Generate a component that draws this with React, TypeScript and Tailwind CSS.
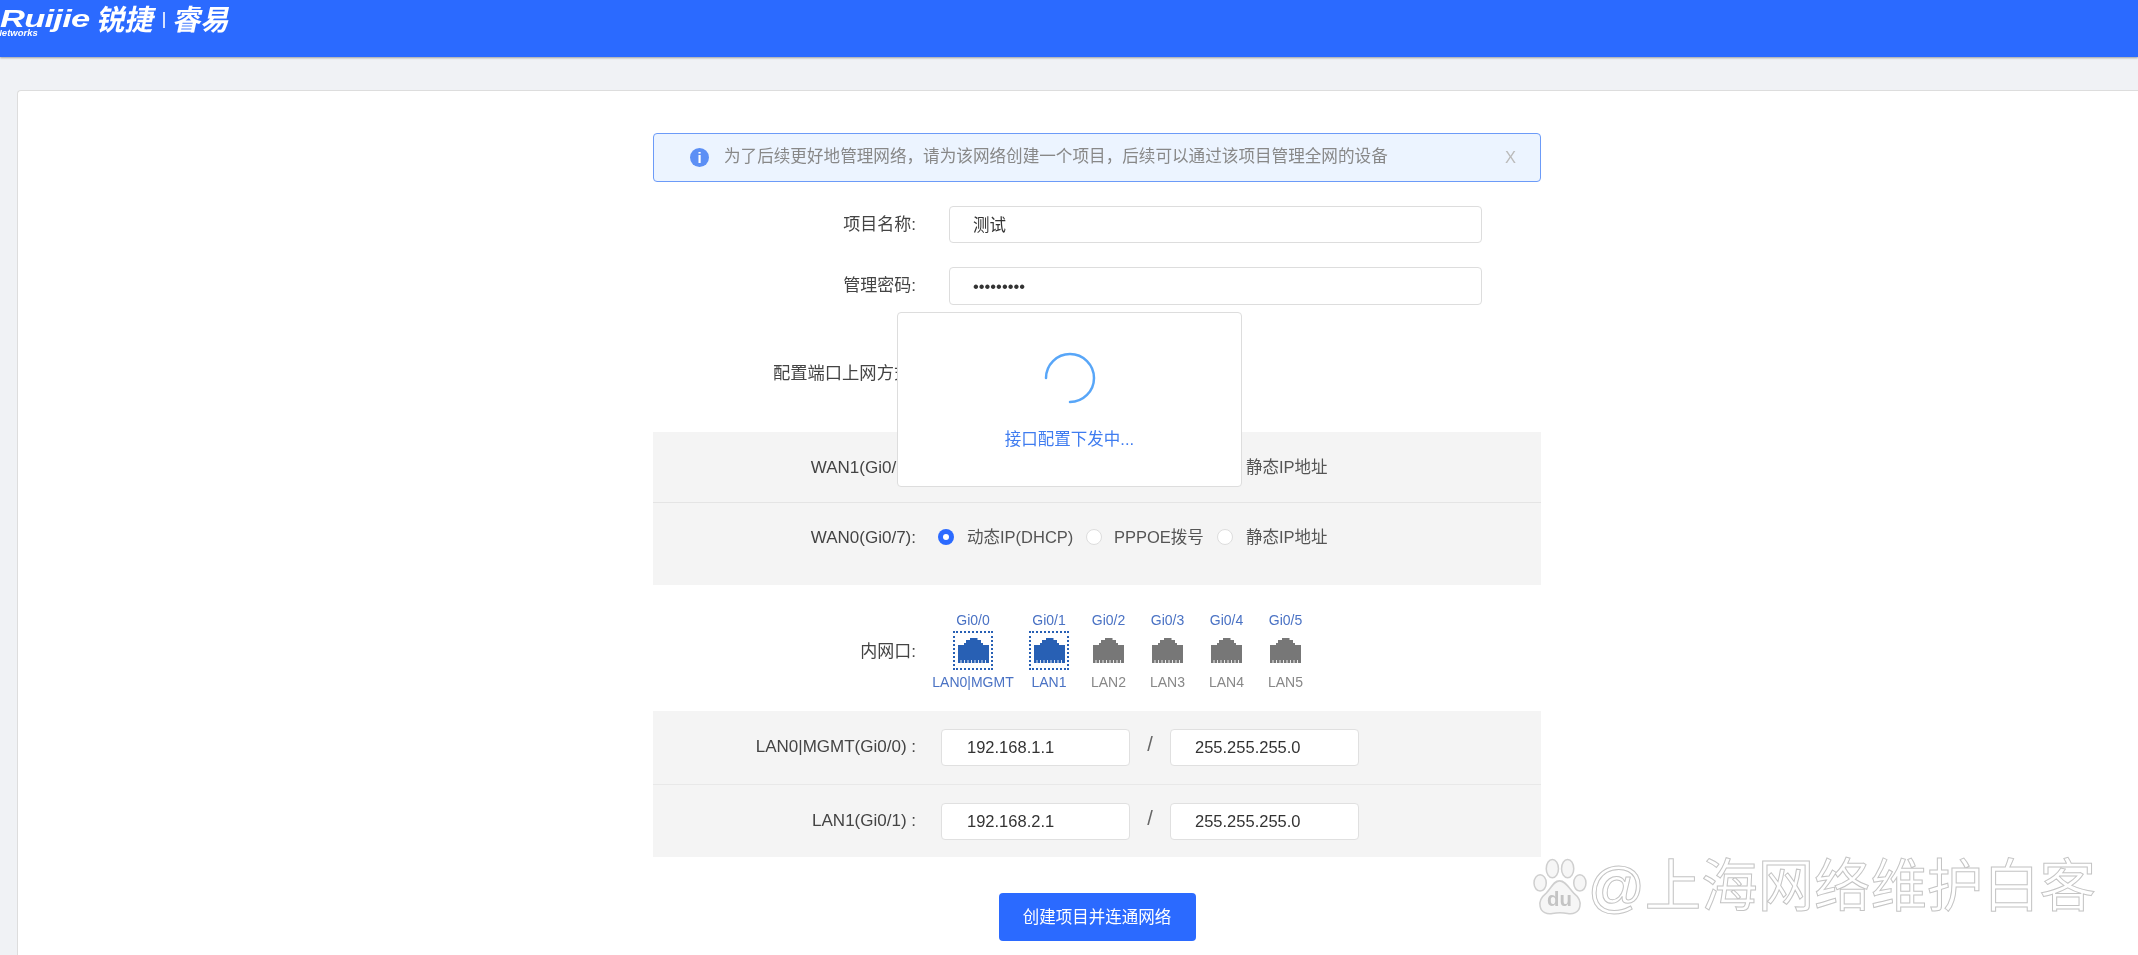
const cjk = 'font-["Liberation_Sans","Noto_Sans_CJK_SC",sans-serif]'

function Radio({ checked = false }: { checked?: boolean }) {
  if (checked) {
    return (
      <span className="flex h-4 w-4 items-center justify-center rounded-full bg-[#2b6aff]">
        <span className="h-[6px] w-[6px] rounded-full bg-white" />
      </span>
    )
  }
  return <span className="h-4 w-4 rounded-full border border-[#dddddd] bg-white" />
}

function WanRow({ label, border }: { label: string; border?: boolean }) {
  return (
    <div className={border ? 'flex h-[71px] items-center border-b border-[#e4e4e4] pt-[1px]' : 'flex h-[82px] items-start pt-[22px]'}>
      <div className="w-[263px] text-right text-[17px] text-[#444444]">{label}</div>
      <div className="ml-[22px] flex items-center">
        <Radio checked />
        <span className="ml-[13px] w-[119px] text-[#555555]">动态IP(DHCP)</span>
        <Radio />
        <span className="ml-[12px] w-[103px] text-[#555555]">PPPOE拨号</span>
        <Radio />
        <span className="ml-[13px] text-[#555555]">静态IP地址</span>
      </div>
    </div>
  )
}

function PortIcon({ active }: { active: boolean }) {
  return (
    <span className={active ? 'flex h-[39px] w-[40px] items-center justify-center border-[2px] border-dotted border-[#2860b4]' : 'flex h-[39px] w-[40px] items-center justify-center'}>
      <svg width="31" height="25" viewBox="0 0 31 25">
        <path
          d="M12 0h7.500v2h3.500v3h2v2h6v18H0V7h6V5h2V2h4z"
          fill={active ? '#2860b4' : '#777777'}
        />
        <path d="M3 25v-3M6.500 25v-3M10 25v-3M13.500 25v-3M17 25v-3M20.500 25v-3M24 25v-3M27.500 25v-3" stroke="#ffffff" strokeWidth="1" opacity="0.85" />
      </svg>
    </span>
  )
}

const ports = [
  { gi: 'Gi0/0', lan: 'LAN0|MGMT', active: true, width: 'w-[92px]' },
  { gi: 'Gi0/1', lan: 'LAN1', active: true, width: 'w-[60px]' },
  { gi: 'Gi0/2', lan: 'LAN2', active: false, width: 'w-[59px]' },
  { gi: 'Gi0/3', lan: 'LAN3', active: false, width: 'w-[59px]' },
  { gi: 'Gi0/4', lan: 'LAN4', active: false, width: 'w-[59px]' },
  { gi: 'Gi0/5', lan: 'LAN5', active: false, width: 'w-[59px]' },
]

function LanRow({ label, ip, border }: { label: string; ip: string; border?: boolean }) {
  return (
    <div className={border ? 'flex h-[74px] items-center border-b border-[#e8e8e8] pb-[1px]' : 'flex h-[72px] items-center'}>
      <div className="w-[263px] text-right text-[17px] text-[#444444]">{label}</div>
      <input
        readOnly
        value={ip}
        className="ml-[25px] h-[37px] w-[189px] rounded border border-[#e0e0e0] bg-white pl-[25px] text-[#333333] outline-none"
      />
      <span className="mb-[6px] w-[40px] text-center text-[20px] text-[#666666]">/</span>
      <input
        readOnly
        value="255.255.255.0"
        className="h-[37px] w-[189px] rounded border border-[#e0e0e0] bg-white pl-[24px] text-[#333333] outline-none"
      />
    </div>
  )
}

function Watermark() {
  return (
    <div className="absolute right-[42px] bottom-[39px] flex items-center gap-[1px]">
      <svg width="54" height="58" viewBox="0 0 53 56">
        <g fill="#f6f6f6" stroke="#cfcfcf" strokeWidth="1.500">
          <ellipse cx="7" cy="24" rx="6" ry="8" />
          <ellipse cx="19" cy="10" rx="6" ry="9" />
          <ellipse cx="34" cy="10" rx="6" ry="9" />
          <ellipse cx="46" cy="24" rx="6" ry="8" />
          <path d="M26 22c-6 0-8 7-13 12-5 4-7 9-6 13 1 6 7 8 12 7 5-1 10-1 15 0 5 1 11-1 12-7 1-4-1-9-6-13-5-5-8-12-14-12z" />
        </g>
        <text x="26" y="47" textAnchor="middle" fontSize="20" fontWeight="bold" fontFamily="Liberation Sans" fill="#c4c4c4">du</text>
      </svg>
      <span className={`${cjk} text-[56.400px] leading-none text-white [-webkit-text-stroke:1px_#c4c4c4]`}>@上海网络维护白客</span>
    </div>
  )
}

export default function App() {
  return (
    <div className={`${cjk} relative flex h-[955px] flex-col overflow-hidden bg-[#f0f2f5] text-[16.500px] blur-[0.4px]`}>
      <header className="relative flex h-[57px] shrink-0 items-start overflow-hidden bg-[#2b6aff] text-white shadow-[0_1px_2px_rgba(0,0,0,0.35)]">
        <span className="absolute top-[28px] left-[-5px] text-[9.500px] leading-[10px] font-bold italic">Networks</span>
        <div className="flex items-start pt-[2px]">
          <span className="w-[98px] origin-left scale-x-150 pt-[6px] text-[23px] leading-[22px] font-bold tracking-[-0.500px] italic">Ruijie</span>
          <span className="text-[28.500px] leading-[36px] font-bold -skew-x-12">锐捷</span>
          <span className="mt-[10px] ml-[8px] h-[16px] w-[2px] bg-white/80" />
          <span className="ml-[9px] text-[28.500px] leading-[36px] font-bold -skew-x-12">睿易</span>
        </div>
      </header>

      <main className="flex flex-1 pt-[33px] pl-[17px]">
        <div className="flex-1 rounded-tl border border-r-0 border-b-0 border-[#dddddd] bg-white pt-[42px] pl-[635px]">
          <div className="relative w-[888px]">
            <div className="flex h-[49px] items-center rounded border border-[#6c9bf8] bg-[#ecf4ff] pr-[24px] pl-[36px] text-[#888888]">
              <span className="flex h-[19px] w-[19px] items-center justify-center rounded-full bg-[#5c8ff5] text-[15px] leading-none font-bold text-white">i</span>
              <span className="ml-[15px] flex-1 text-[16.600px]">为了后续更好地管理网络，请为该网络创建一个项目，后续可以通过该项目管理全网的设备</span>
              <span className="text-[#bbbbbb]">X</span>
            </div>

            <div className="mt-[24px] flex h-[37px] items-center">
              <div className="w-[263px] text-right text-[17px] text-[#444444]">项目名称:</div>
              <input readOnly value="测试" className="ml-[33px] h-[37px] w-[533px] rounded border border-[#dddddd] pb-[1px] pl-[23px] text-[#333333] outline-none" />
            </div>
            <div className="mt-[24px] flex h-[38px] items-center">
              <div className="w-[263px] text-right text-[17px] text-[#444444]">管理密码:</div>
              <input readOnly type="password" value="123456789" className="ml-[33px] h-[38px] w-[533px] rounded border border-[#dddddd] pl-[23px] text-[#333333] outline-none" />
            </div>

            <div className="flex h-[127px] items-start pt-[56px]">
              <div className="w-[263px] text-right text-[17.300px] text-[#444444]">配置端口上网方式:</div>
            </div>

            <div className="bg-[#f4f4f4]">
              <WanRow label="WAN1(Gi0/6):" border />
              <WanRow label="WAN0(Gi0/7):" />
            </div>

            <div className="flex h-[126px] items-center pt-[7px]">
              <div className="w-[263px] text-right text-[17px] text-[#444444]">内网口:</div>
              <div className="ml-[11px] flex">
                {ports.map((port) => (
                  <div key={port.gi} className={`${port.width} flex flex-col items-center text-[14px] whitespace-nowrap`}>
                    <span className="text-[#4a72c4]">{port.gi}</span>
                    <PortIcon active={port.active} />
                    <span className={port.active ? 'mt-[2px] text-[#4a72c4]' : 'mt-[2px] text-[#888888]'}>{port.lan}</span>
                  </div>
                ))}
              </div>
            </div>

            <div className="bg-[#f4f4f4]">
              <LanRow label="LAN0|MGMT(Gi0/0) :" ip="192.168.1.1" border />
              <LanRow label="LAN1(Gi0/1) :" ip="192.168.2.1" />
            </div>

            <div className="mt-[36px] flex justify-center">
              <button type="button" className="h-[48px] w-[197px] rounded bg-[#2b6aff] text-white">
                创建项目并连通网络
              </button>
            </div>

            <div className="absolute top-[179px] left-[244px] flex h-[175px] w-[345px] flex-col items-center rounded border border-[#dddddd] bg-white pt-[39px]">
              <svg width="52" height="52" viewBox="0 0 52 52" fill="none">
                <path d="M2 26A24 24 0 1 1 26 50" stroke="#58a6f8" strokeWidth="2.500" strokeLinecap="round" />
              </svg>
              <span className="mt-[23px] leading-[24px] text-[#3f7cf0]">接口配置下发中...</span>
            </div>
          </div>
        </div>
      </main>

      <Watermark />
    </div>
  )
}
